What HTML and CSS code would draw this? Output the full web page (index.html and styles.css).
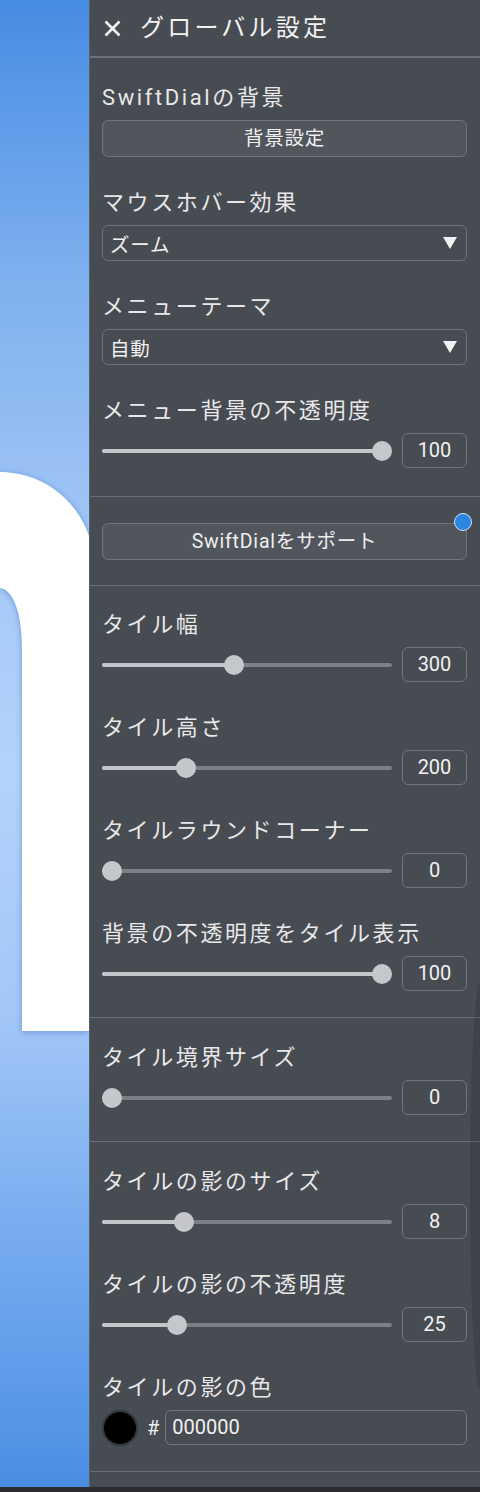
FILE: index.html
```html
<!DOCTYPE html>
<html lang="ja">
<head>
<meta charset="utf-8">
<title>グローバル設定</title>
<link rel="stylesheet" href="styles.css">
</head>
<body>
<div class="app">
  <div class="backdrop">
    <svg class="letter" width="89" height="1487" viewBox="0 0 89 1487">
      <path d="M0,472 A94,94 0 0 1 89,536 L89,1031 L22,1031 L22,650 C22,614 14,590 0,588 Z"/>
    </svg>
  </div>
  <aside class="panel">
    <header class="panel-header">
      <svg class="close" width="17" height="17" viewBox="0 0 17 17"><path d="M1.5 1.5 L15.5 15.5 M15.5 1.5 L1.5 15.5"/></svg>
      <h1>グローバル設定</h1>
    </header>

    <section class="group group-first">
      <div class="field">
        <label>SwiftDialの背景</label>
        <button class="btn">背景設定</button>
      </div>
      <div class="field">
        <label>マウスホバー効果</label>
        <div class="select"><span>ズーム</span><svg class="caret" width="14" height="12" viewBox="0 0 14 12"><polygon points="0,0 14,0 7,12"/></svg></div>
      </div>
      <div class="field">
        <label>メニューテーマ</label>
        <div class="select"><span>自動</span><svg class="caret" width="14" height="12" viewBox="0 0 14 12"><polygon points="0,0 14,0 7,12"/></svg></div>
      </div>
      <div class="field">
        <label>メニュー背景の不透明度</label>
        <div class="slider-row">
          <div class="slider" style="--p:1"><div class="fill"></div><div class="thumb"></div></div>
          <div class="num">100</div>
        </div>
      </div>
    </section>

    <section class="group group-support">
      <div class="support-wrap">
        <button class="btn">SwiftDialをサポート</button>
        <span class="dot"></span>
      </div>
    </section>

    <section class="group">
      <div class="field">
        <label>タイル幅</label>
        <div class="slider-row">
          <div class="slider" style="--p:0.452"><div class="fill"></div><div class="thumb"></div></div>
          <div class="num">300</div>
        </div>
      </div>
      <div class="field">
        <label>タイル高さ</label>
        <div class="slider-row">
          <div class="slider" style="--p:0.274"><div class="fill"></div><div class="thumb"></div></div>
          <div class="num">200</div>
        </div>
      </div>
      <div class="field">
        <label>タイルラウンドコーナー</label>
        <div class="slider-row">
          <div class="slider" style="--p:0"><div class="fill"></div><div class="thumb"></div></div>
          <div class="num">0</div>
        </div>
      </div>
      <div class="field">
        <label>背景の不透明度をタイル表示</label>
        <div class="slider-row">
          <div class="slider" style="--p:1"><div class="fill"></div><div class="thumb"></div></div>
          <div class="num">100</div>
        </div>
      </div>
    </section>

    <section class="group group-shift">
      <div class="field">
        <label>タイル境界サイズ</label>
        <div class="slider-row">
          <div class="slider" style="--p:0"><div class="fill"></div><div class="thumb"></div></div>
          <div class="num">0</div>
        </div>
      </div>
    </section>

    <section class="group group-shift">
      <div class="field">
        <label>タイルの影のサイズ</label>
        <div class="slider-row">
          <div class="slider" style="--p:0.267"><div class="fill"></div><div class="thumb"></div></div>
          <div class="num">8</div>
        </div>
      </div>
      <div class="field">
        <label>タイルの影の不透明度</label>
        <div class="slider-row">
          <div class="slider" style="--p:0.241"><div class="fill"></div><div class="thumb"></div></div>
          <div class="num">25</div>
        </div>
      </div>
      <div class="field">
        <label>タイルの影の色</label>
        <div class="color-row">
          <span class="swatch"></span>
          <span class="hash">#</span>
          <div class="hex">000000</div>
        </div>
      </div>
    </section>

    <div class="edge-shade"></div>
  </aside>
</div>
</body>
</html>
```

FILE: styles.css
```css
* { box-sizing: border-box; }

html, body {
  margin: 0;
  padding: 0;
}

body {
  background: #2a2c30;
  font-family: Roboto, "Noto Sans CJK JP", sans-serif;
  color: #e9e9ea;
}

.app {
  display: flex;
  width: 480px;
  height: 1487px;
  overflow: hidden;
}

.backdrop {
  width: 89px;
  flex: none;
  background: linear-gradient(to bottom, #468ce3 0%, #7fb1ef 19%, #a6c9f7 38%, #b4d3fb 52%, #a3c7f7 68%, #7aaef0 82%, #4a8ee3 100%);
}

.letter {
  display: block;
}

.letter path {
  fill: #ffffff;
  filter: drop-shadow(0 1px 3px rgba(40, 90, 190, 0.45));
}

.panel {
  position: relative;
  flex: 1;
  background: #474b52;
  border-left: 1px solid #5a5e65;
  overflow: hidden;
}

.panel-header {
  height: 58px;
  display: flex;
  align-items: center;
  padding-left: 14px;
  border-bottom: 2px solid #6c7077;
}

.close {
  display: block;
  margin-right: 19px;
}

.close path {
  stroke: #f4f4f4;
  stroke-width: 2.6;
  fill: none;
}

.panel-header h1 {
  margin: 0;
  font-size: 24px;
  font-weight: 400;
  letter-spacing: 3.2px;
  color: #f2f2f3;
  line-height: 30px;
}

.group {
  display: flex;
  flex-direction: column;
  gap: 31px;
  padding: 24px 13px 26px 12px;
  border-bottom: 1px solid #6a6e75;
}

.group-first {
  padding-top: 25px;
  padding-bottom: 28px;
}

.group-support {
  padding-top: 26px;
  padding-bottom: 25px;
}

.group-shift {
  padding-top: 25px;
}

.field {
  display: flex;
  flex-direction: column;
}

.field label {
  display: block;
  font-size: 22px;
  line-height: 30px;
  letter-spacing: 2.6px;
  margin-bottom: 7px;
  color: #e8e8e9;
}

.btn {
  display: block;
  width: 100%;
  height: 37px;
  background: #51565d;
  border: 1px solid #70747b;
  border-radius: 6px;
  color: #eeeeef;
  font-family: Roboto, "Noto Sans CJK JP", sans-serif;
  font-size: 19.5px;
  letter-spacing: 0.8px;
  padding: 0;
  line-height: 35px;
}

.select {
  height: 36px;
  border: 1px solid #6e7279;
  border-radius: 6px;
  display: flex;
  align-items: center;
  justify-content: space-between;
  padding: 0 9px 0 7px;
  font-size: 19.5px;
  letter-spacing: 0.8px;
  color: #f0f0f0;
}

.caret polygon {
  fill: #f2f2f2;
}

.slider-row {
  display: flex;
  align-items: center;
  gap: 10px;
  height: 35px;
}

.slider {
  position: relative;
  flex: 1;
  height: 20px;
}

.slider::before {
  content: "";
  position: absolute;
  left: 0;
  right: 0;
  top: 8px;
  height: 4px;
  border-radius: 2px;
  background: #7b7f87;
}

.fill {
  position: absolute;
  left: 0;
  top: 8px;
  height: 4px;
  border-radius: 2px;
  background: #c4c6ca;
  width: calc(10px + (100% - 20px) * var(--p));
}

.thumb {
  position: absolute;
  top: 0;
  left: calc((100% - 20px) * var(--p));
  width: 20px;
  height: 20px;
  border-radius: 50%;
  background: #c5c7cb;
}

.num {
  width: 65px;
  height: 35px;
  flex: none;
  border: 1px solid #70747b;
  border-radius: 6px;
  text-align: center;
  font-size: 20px;
  line-height: 33px;
  color: #f1f1f1;
}

.support-wrap {
  position: relative;
}

.dot {
  position: absolute;
  top: -10px;
  right: -5px;
  width: 18px;
  height: 18px;
  border-radius: 50%;
  background: #2b86e3;
  border: 1.5px solid #cfe0f3;
}

.color-row {
  display: flex;
  align-items: center;
  height: 35px;
}

.swatch {
  width: 36px;
  height: 36px;
  flex: none;
  border-radius: 50%;
  background: #000;
  border: 2px solid #34373c;
}

.hash {
  font-size: 20px;
  margin: 0 6px 0 9px;
  color: #eeeeee;
}

.hex {
  flex: 1;
  height: 35px;
  border: 1px solid #70747b;
  border-radius: 6px;
  font-size: 20px;
  line-height: 33px;
  padding-left: 6px;
  color: #f1f1f1;
}

.edge-shade {
  position: absolute;
  right: 0;
  top: 983px;
  width: 10px;
  height: 405px;
  background: rgba(0, 0, 0, 0.11);
  border-radius: 100% 0 0 100% / 50% 0 0 50%;
}
```
